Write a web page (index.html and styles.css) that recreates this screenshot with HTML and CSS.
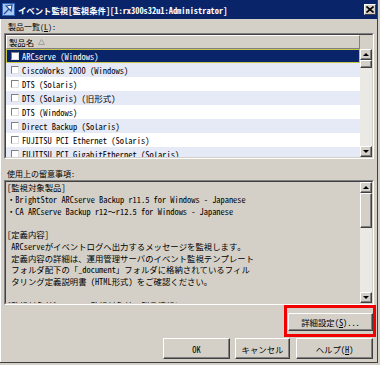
FILE: index.html
```html
<!DOCTYPE html>
<html lang="ja">
<head>
  <meta charset="UTF-8">
  <title>イベント監視[監視条件]</title>
  <link rel="stylesheet" href="styles.css">
</head>
<body>
  <div class="window">
    <!-- タイトルバー -->
    <div class="titlebar">
      <svg class="app-icon" width="13" height="13" viewBox="0 0 13 13">
        <rect x="0.5" y="0.5" width="12" height="12" fill="#a9c8ee" stroke="#3466b8"/>
        <path d="M2 11 L6.5 6.5 M4 3 L10 2 L9 8 Z" fill="#ffffff" stroke="#1c4aa0" stroke-width="1.2"/>
      </svg>
      <span class="title">イベント監視[監視条件][1:rx300s32u1:Administrator]</span>
      <span class="close-btn">
        <svg width="8" height="7" viewBox="0 0 8 7"><path d="M0.5 0.5 L7.5 6.5 M7.5 0.5 L0.5 6.5" stroke="#000" stroke-width="1.6"/></svg>
      </span>
    </div>

    <div class="client">
      <div class="label">製品一覧(<u>L</u>):</div>

      <!-- 製品リスト -->
      <div class="sunken list">
        <div class="sunken-in">
          <div class="list-head">
            <div class="head-cell">製品名
              <svg class="sort" width="7" height="6" viewBox="0 0 7 6"><path d="M3.5 0.5 L6.5 5.5 L0.5 5.5 Z" fill="none" stroke="#a0a0a0"/></svg>
            </div>
            <div class="head-fill"></div>
          </div>
          <div class="list-body">
            <div class="rows">
              <div class="row selected"><span class="check"></span>ARCserve (Windows)</div>
              <div class="row"><span class="check"></span>CiscoWorks 2000 (Windows)</div>
              <div class="row"><span class="check"></span>DTS (Solaris)</div>
              <div class="row"><span class="check"></span>DTS (Solaris) (旧形式)</div>
              <div class="row"><span class="check"></span>DTS (Windows)</div>
              <div class="row"><span class="check"></span>Direct Backup (Solaris)</div>
              <div class="row"><span class="check"></span>FUJITSU PCI Ethernet (Solaris)</div>
              <div class="row"><span class="check"></span>FUJITSU PCI GigabitEthernet (Solaris)</div>
            </div>
            <div class="vscroll">
              <div class="arrow up"><span class="tri-up"></span></div>
              <div class="thumb list-thumb"></div>
              <div class="track"></div>
              <div class="arrow down"><span class="tri-down"></span></div>
            </div>
          </div>
        </div>
      </div>

      <div class="label label-notes">使用上の留意事項:</div>

      <!-- 留意事項 -->
      <div class="sunken notes">
        <div class="sunken-in notes-in">
          <div class="notes-text">
            <div class="line">[監視対象製品]</div>
            <div class="line">・BrightStor ARCserve Backup r11.5 for Windows - Japanese</div>
            <div class="line">・CA ARCserve Backup r12～r12.5 for Windows - Japanese</div>
            <div class="line">&nbsp;</div>
            <div class="line">[定義内容]</div>
            <div class="line">&nbsp;ARCserveがイベントログへ出力するメッセージを監視します。</div>
            <div class="line">&nbsp;定義内容の詳細は、運用管理サーバのイベント監視テンプレート</div>
            <div class="line">&nbsp;フォルダ配下の「_document」フォルダに格納されているフィル</div>
            <div class="line">&nbsp;タリング定義説明書 (HTML形式) をご確認ください。</div>
            <div class="line">&nbsp;</div>
            <div class="line">[監視対象外]&nbsp;・・・ 監視対象外の製品情報について</div>
          </div>
          <div class="vscroll">
            <div class="arrow up"><span class="tri-up"></span></div>
            <div class="thumb notes-thumb"></div>
            <div class="track"></div>
            <div class="arrow down"><span class="tri-down"></span></div>
          </div>
        </div>
      </div>

      <!-- 詳細設定 -->
      <div class="detail-row">
        <div class="mark">
          <button class="btn btn-detail">詳細設定(<u>S</u>)...</button>
        </div>
      </div>

      <div class="button-row">
        <button class="btn btn-ok">OK</button>
        <button class="btn btn-cancel">キャンセル</button>
        <button class="btn btn-help">ヘルプ(<u>H</u>)</button>
      </div>
    </div>
  </div>
</body>
</html>
```

FILE: styles.css
```css
* {
  margin: 0;
  padding: 0;
  box-sizing: border-box;
}

html, body {
  width: 380px;
  height: 365px;
  overflow: hidden;
  background: #d4d0c8;
  font-family: "Noto Sans Mono CJK JP", "Noto Sans CJK JP", "DejaVu Sans", sans-serif;
  font-size: 8.4px;
  color: #000;
}

.window {
  width: 378px;
  height: 363px;
  background: #d4d0c8;
  box-shadow: inset -1px -1px #404040, inset 1px 0 #ffffff;
}

/* タイトルバー */
.titlebar {
  height: 19px;
  width: 377px;
  display: flex;
  align-items: center;
  background: #0a246a;
  color: #fff;
}

.app-icon {
  margin-left: 2px;
  flex: none;
}

.title {
  margin-left: 3px;
  font-weight: bold;
  font-size: 8.4px;
  white-space: nowrap;
}

.close-btn {
  margin-left: auto;
  margin-right: 1px;
  width: 12px;
  height: 11px;
  display: flex;
  align-items: center;
  justify-content: center;
  background: #d4d0c8;
  border-top: 1px solid #fff;
  border-left: 1px solid #fff;
  border-right: 1px solid #404040;
  border-bottom: 1px solid #404040;
}

.client {
  padding: 0 4px 0 4px;
}

.label {
  margin-top: 2px;
  height: 12px;
  line-height: 12px;
  padding-left: 4px;
  font-size: 8px;
}

.label-notes {
  margin-top: 9px;
  padding-left: 3px;
}

/* へこんだ枠 */
.sunken {
  border-top: 1px solid #808080;
  border-left: 1px solid #808080;
  border-right: 1px solid #ffffff;
  border-bottom: 1px solid #ffffff;
}

.sunken-in {
  height: 100%;
  border-top: 1px solid #404040;
  border-left: 1px solid #404040;
  border-right: 1px solid #d4d0c8;
  border-bottom: 1px solid #d4d0c8;
}

/* 製品リスト */
.list {
  height: 126px;
}

.list-head {
  display: flex;
  height: 14px;
}

.head-cell {
  flex: 1;
  display: flex;
  align-items: center;
  gap: 4px;
  padding-left: 2px;
  background: #d4d0c8;
  border-top: 1px solid #fff;
  border-left: 1px solid #fff;
  border-right: 1px solid #808080;
  border-bottom: 1px solid #808080;
  white-space: nowrap;
}

.sort {
  flex: none;
}

.head-fill {
  width: 12px;
  background: #d4d0c8;
}

.list-body {
  display: flex;
  height: 108px;
}

.rows {
  flex: 1;
  overflow: hidden;
  background: #fff;
}

.row {
  height: 14px;
  display: flex;
  align-items: center;
  padding-left: 5px;
  white-space: nowrap;
  font-size: 8.5px;
}

.row:nth-child(even) {
  background: #e6e9f6;
}

.row.selected {
  background: #0a246a;
  color: #fff;
  box-shadow: inset 0 0 0 1px #c9c64a;
}

.check {
  width: 8px;
  height: 8px;
  margin-right: 3px;
  background: #fff;
  border-top: 1px solid #808080;
  border-left: 1px solid #808080;
  border-right: 1px solid #e0e0e0;
  border-bottom: 1px solid #e0e0e0;
  flex: none;
}

/* スクロールバー */
.vscroll {
  width: 12px;
  display: flex;
  flex-direction: column;
  background: #ebe9e4;
  flex: none;
}

.arrow,
.thumb {
  background: #d4d0c8;
  border-top: 1px solid #fff;
  border-left: 1px solid #fff;
  border-right: 1px solid #404040;
  border-bottom: 1px solid #404040;
  box-shadow: inset -1px -1px #808080;
}

.arrow {
  height: 11px;
  display: flex;
  align-items: center;
  justify-content: center;
  flex: none;
}

.tri-up {
  width: 0;
  height: 0;
  border-left: 3px solid transparent;
  border-right: 3px solid transparent;
  border-bottom: 3px solid #000;
}

.tri-down {
  width: 0;
  height: 0;
  border-left: 3px solid transparent;
  border-right: 3px solid transparent;
  border-top: 3px solid #000;
}

.track {
  flex: 1;
}

.list-thumb {
  height: 8px;
  flex: none;
}

.notes-thumb {
  height: 35px;
  flex: none;
}

/* 留意事項 */
.notes {
  height: 125px;
}

.notes-in {
  display: flex;
}

.notes-text {
  flex: 1;
  overflow: hidden;
  padding-left: 1px;
}

.line {
  height: 11.75px;
  line-height: 11.75px;
  white-space: nowrap;
}

/* ボタン */
.btn {
  font-family: inherit;
  font-size: 8.4px;
  color: #000;
  background: #d4d0c8;
  border-top: 1px solid #fff;
  border-left: 1px solid #fff;
  border-right: 1px solid #404040;
  border-bottom: 1px solid #404040;
  box-shadow: inset -1px -1px #808080;
  cursor: pointer;
}

.detail-row {
  display: flex;
  justify-content: flex-end;
}

.mark {
  margin-right: -2px;
  border: 3px solid #f00000;
  padding: 5px 0 3px 1px;
}

.btn-detail {
  width: 85px;
  height: 18px;
}

.button-row {
  margin-top: 1px;
  margin-right: 1px;
  display: flex;
  justify-content: flex-end;
  gap: 5px;
}

.btn-ok,
.btn-cancel,
.btn-help {
  height: 21px;
}

.btn-ok {
  width: 67px;
}

.btn-cancel {
  width: 55px;
}

.btn-help {
  width: 77px;
  margin-left: 1px;
}
```
